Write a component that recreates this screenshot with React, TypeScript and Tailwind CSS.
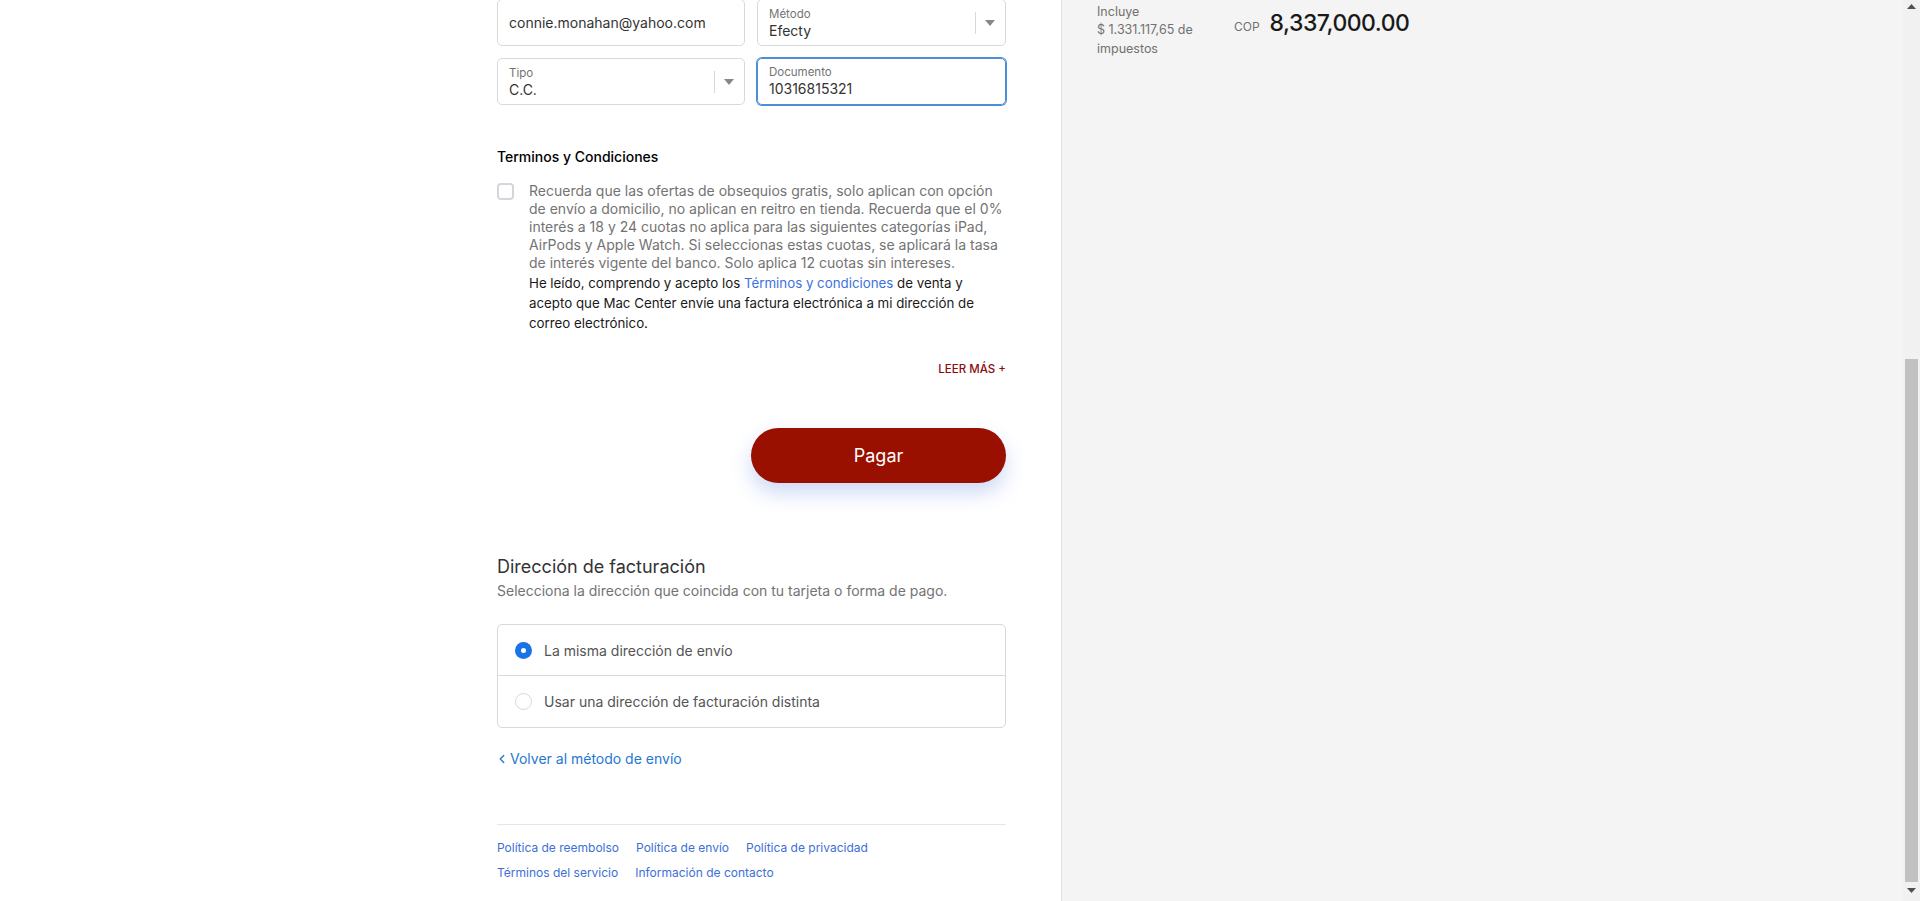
import { ChevronLeft } from 'lucide-react'

const font = { fontFamily: 'Inter, "Liberation Sans", sans-serif' }

function SelectField({ label, value, width }: { label: string; value: string; width: string }) {
  return (
    <div className={`relative h-[47px] ${width} rounded-[5px] border border-[#d9d9d9] bg-white pl-[11px] pt-[7px]`}>
      <div className="text-[11.5px] leading-[14px] text-[#737373]">{label}</div>
      <div className="text-[14px] leading-[20px] text-[#333]">{value}</div>
      {/* divider + caret */}
      <div className="absolute right-[29px] top-[12px] h-[22px] w-px bg-[#d9d9d9]" />
      <svg className="absolute right-[10px] top-[20px]" width="10" height="6" viewBox="0 0 10 6">
        <path d="M0 0h10L5 6z" fill="#888" />
      </svg>
    </div>
  )
}

export default function App() {
  return (
    <div className="flex h-[901px] w-full overflow-hidden bg-white" style={font}>
      {/* Main column */}
      <div className="w-[1061px] shrink-0 bg-white">
        <div className="ml-[497px] mt-[-1px] w-[509px]">
          {/* Contact / payment fields */}
          <div className="flex gap-[12px]">
            <div className="flex h-[47px] w-[248px] items-center rounded-[5px] border border-[#d9d9d9] px-[11px] text-[14px] text-[#333]">
              connie.monahan@yahoo.com
            </div>
            <SelectField label="Método" value="Efecty" width="w-[249px]" />
          </div>
          <div className="mt-[12px] flex gap-[12px]">
            <SelectField label="Tipo" value="C.C." width="w-[248px]" />
            <div className="h-[47px] w-[249px] rounded-[5px] border border-[#4a90d9] pl-[11px] pt-[6px] shadow-[0_0_0_1px_#4a90d9]">
              <div className="text-[11.5px] leading-[14px] text-[#737373]">Documento</div>
              <div className="text-[14px] leading-[20px] text-[#333]">10316815321</div>
            </div>
          </div>

          {/* Terms */}
          <h3 className="mt-[42px] text-[14px] font-medium leading-[20px] text-black">Terminos y Condiciones</h3>
          <div className="mt-[15px] flex">
            <div className="mt-[1px] h-[17px] w-[17px] shrink-0 rounded-[4px] border-2 border-[#d3d6dc] bg-white" />
            <div className="ml-[15px] w-[477px]">
              <p className="text-[14px] leading-[18px] text-[#737373]">
                Recuerda que las ofertas de obsequios gratis, solo aplican con opción de envío a domicilio, no aplican en
                reitro en tienda. Recuerda que el 0% interés a 18 y 24 cuotas no aplica para las siguientes categorías
                iPad, AirPods y Apple Watch. Si seleccionas estas cuotas, se aplicará la tasa de interés vigente del banco.
                Solo aplica 12 cuotas sin intereses.
              </p>
              <p className="mt-[1px] text-[13.3px] leading-[20px] text-[#1a1a1a]">
                He leído, comprendo y acepto los <span className="text-[#3d72e0]">Términos y condiciones</span> de venta y
                acepto que Mac Center envíe una factura electrónica a mi dirección de correo electrónico.
              </p>
            </div>
          </div>
          <div className="mt-[28px] text-right text-[11.5px] font-medium leading-[16px] text-[#8a0d0d]">LEER MÁS +</div>

          {/* Pay */}
          <div className="mt-[51px] flex justify-end">
            <button className="h-[55px] w-[255px] rounded-full bg-[#991000] text-[18px] font-normal text-white shadow-[0_10px_20px_rgba(80,120,220,0.28)]">
              Pagar
            </button>
          </div>

          {/* Billing address */}
          <h2 className="mt-[72px] text-[18px] leading-[24px] text-[#333]">Dirección de facturación</h2>
          <p className="mt-[2px] text-[14px] leading-[20px] text-[#737373]">
            Selecciona la dirección que coincida con tu tarjeta o forma de pago.
          </p>
          <div className="mt-[23px] rounded-[5px] border border-[#d9d9d9] text-[14px] text-[#545454]">
            <label className="flex h-[51px] items-center border-b border-[#d9d9d9] px-[17px]">
              <span className="flex h-[17px] w-[17px] items-center justify-center rounded-full bg-[#1773e6]">
                <span className="h-[5px] w-[5px] rounded-full bg-white" />
              </span>
              <span className="ml-[12px]">La misma dirección de envío</span>
            </label>
            <label className="flex h-[51px] items-center px-[17px]">
              <span className="h-[17px] w-[17px] rounded-full border border-[#d9d9d9] bg-white" />
              <span className="ml-[12px]">Usar una dirección de facturación distinta</span>
            </label>
          </div>

          <a className="mt-[21px] flex items-center text-[14px] leading-[20px] text-[#1f78d1]">
            <ChevronLeft size={14} strokeWidth={2.2} className="-ml-[2px] mr-[1px]" />
            Volver al método de envío
          </a>

          {/* Footer */}
          <div className="mt-[55px] border-t border-[#e6e6e6] pt-[15px] text-[12px] leading-[16px] text-[#3d6fd6]">
            <div className="flex gap-[17px]">
              <span>Política de reembolso</span>
              <span>Política de envío</span>
              <span>Política de privacidad</span>
            </div>
            <div className="mt-[9px] flex gap-[17px]">
              <span>Términos del servicio</span>
              <span>Información de contacto</span>
            </div>
          </div>
        </div>
      </div>

      {/* Order summary sidebar */}
      <div className="flex-1 border-l border-[#e1e1e1] bg-[#f4f4f4]">
        <div className="ml-[35px] mt-[3px] flex items-start">
          <div className="w-[115px] text-[12.5px] leading-[18.4px] text-[#717171]">
            Incluye
            <br />$ 1.331.117,65 de impuestos
          </div>
          <div className="ml-[22px] mt-[3px] flex items-baseline">
            <span className="text-[12px] text-[#717171]">COP</span>
            <span className="ml-[10px] text-[23px] font-medium tracking-[-0.5px] text-[#1a1a1a]">8,337,000.00</span>
          </div>
        </div>
      </div>

      {/* Scrollbar */}
      <div className="flex w-[17px] shrink-0 flex-col items-center bg-[#f1f1f1]">
        <svg className="mt-[4px]" width="9" height="5" viewBox="0 0 9 5">
          <path d="M0 5L4.5 0 9 5z" fill="#505050" />
        </svg>
        <div className="mt-[350px] h-[523px] w-[13px] bg-[#c1c1c1]" />
        <svg className="mt-[6px]" width="9" height="5" viewBox="0 0 9 5">
          <path d="M0 0h9L4.5 5z" fill="#505050" />
        </svg>
      </div>
    </div>
  )
}
